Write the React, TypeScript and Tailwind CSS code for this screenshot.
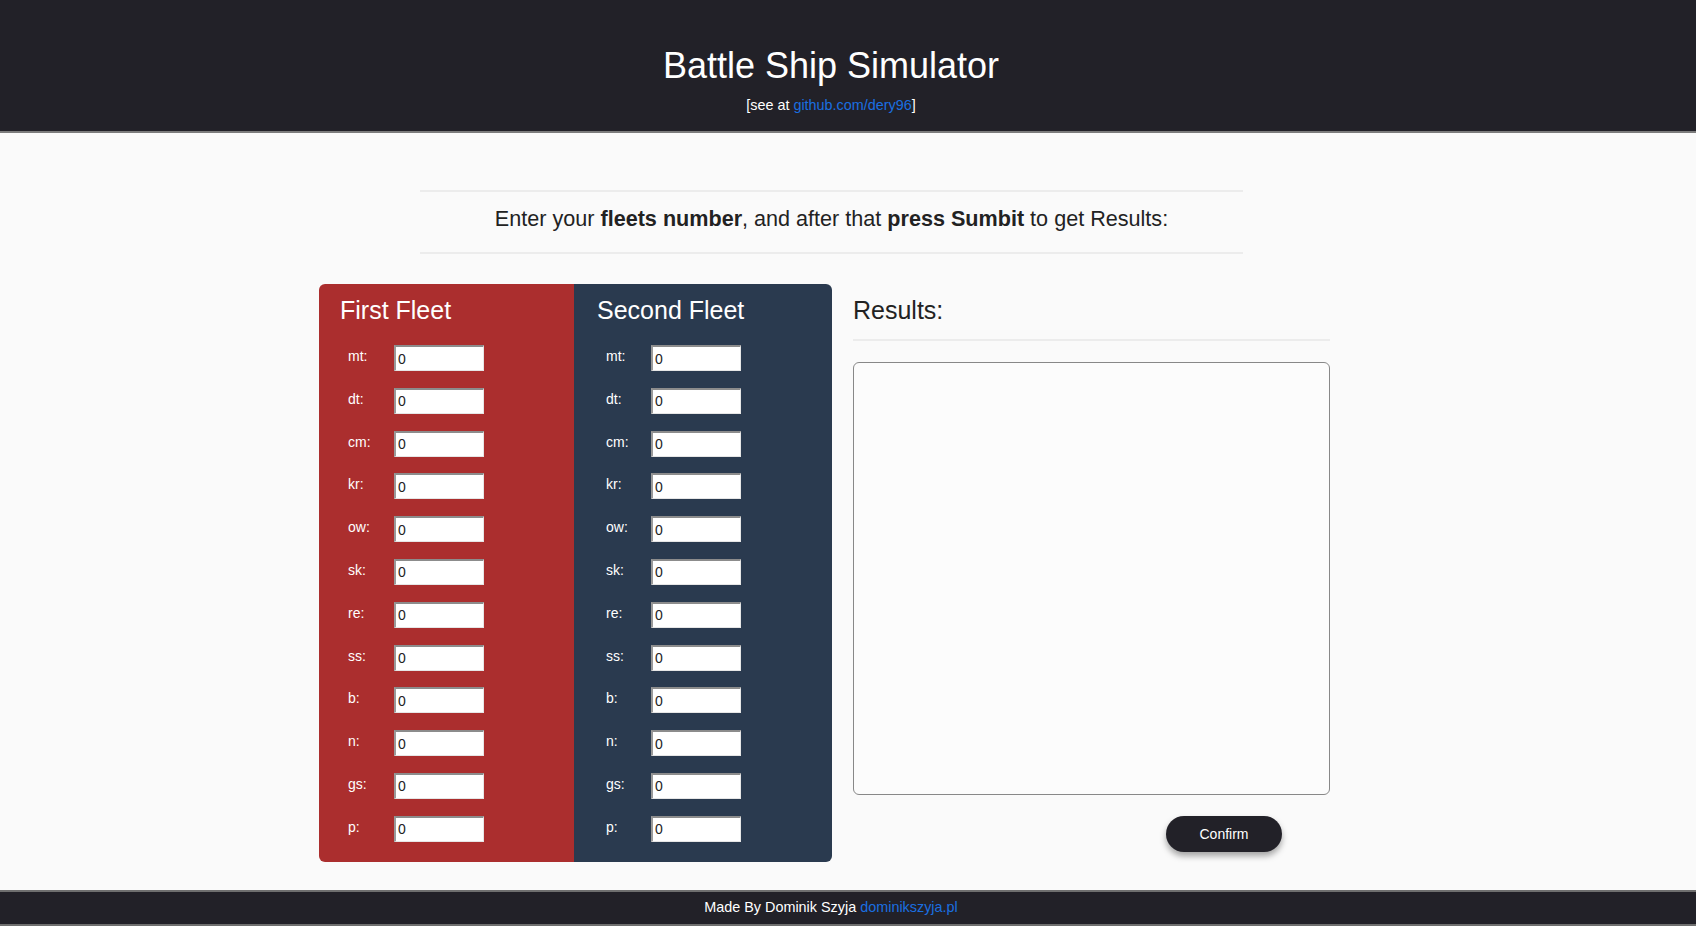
const shipTypes = ["mt", "dt", "cm", "kr", "ow", "sk", "re", "ss", "b", "n", "gs", "p"]

interface FleetProps {
  title: string
  boxClass: string
  titleClass: string
  labelClass: string
}

function Fleet({ title, boxClass, titleClass, labelClass }: FleetProps) {
  return (
    <div className={boxClass}>
      <h3 className={titleClass}>{title}</h3>
      <div className="mt-[20px] flex flex-col gap-[16.8px]">
        {shipTypes.map((s) => (
          <div key={s} className="flex items-start h-[26px]">
            <label className={labelClass}>{s}:</label>
            <input
              type="text"
              defaultValue="0"
              className="w-[90px] h-[26px] bg-white text-[14px] text-[#222] pl-[2px] border-t-2 border-l-2 border-b border-r border-t-[#8c8c8c] border-l-[#9a9a9a] border-b-[#e6e6e6] border-r-[#e6e6e6] outline-none"
            />
          </div>
        ))}
      </div>
    </div>
  )
}

export default function App() {
  return (
    <div className="min-h-[926px] bg-[#fafafa] flex flex-col font-['Liberation_Sans',Arial,sans-serif]">
      <header className="h-[133px] bg-[#222128] border-b-2 border-[#7c7c7c] flex flex-col items-center pt-[46px] pr-[34px]">
        <h1 className="text-[36px] leading-[40px] text-white">Battle Ship Simulator</h1>
        <p className="mt-[9px] text-[14.4px] leading-[20px] text-white">
          [see at <a href="#" className="text-[#1a6fe0]">github.com/dery96</a>]
        </p>
      </header>

      <main className="flex-1 flex flex-col">
        <div className="ml-[420px] w-[823px] mt-[57px]">
          <div className="border-t-2 border-[#ececec]" />
          <p className="pt-[12px] pb-[18px] text-center text-[21.6px] leading-[30px] text-[#222]">
            Enter your <b>fleets number</b>, and after that <b>press Sumbit</b> to get Results:
          </p>
          <div className="border-t-2 border-[#ececec]" />
        </div>

        <div className="ml-[319px] mt-[30px] flex">
          <div className="flex h-[578px] rounded-[6px] overflow-hidden">
            <Fleet
              title="First Fleet"
              boxClass="w-[255px] bg-[#ab2e2e] pt-[11px]"
              titleClass="pl-[21px] text-[25px] leading-[30px] text-white"
              labelClass="w-[75px] pl-[29px] mt-[1px] text-[14px] leading-[20px] text-white"
            />
            <Fleet
              title="Second Fleet"
              boxClass="w-[258px] bg-[#2a3a4f] pt-[11px]"
              titleClass="pl-[23px] text-[25px] leading-[30px] text-white"
              labelClass="w-[77px] pl-[32px] mt-[1px] text-[14px] leading-[20px] text-white"
            />
          </div>

          <div className="ml-[21px] w-[477px] pt-[11px] flex flex-col">
            <h3 className="text-[25px] leading-[30px] text-[#222]">Results:</h3>
            <div className="mt-[14px] border-t-2 border-[#ececec]" />
            <textarea className="mt-[21px] h-[433px] w-full rounded-[6px] border border-[#888] bg-[#fcfcfc] resize-none outline-none" />
            <button className="mt-[21px] ml-[313px] w-[116px] h-[36px] rounded-full bg-[#222128] text-white text-[14px] shadow-[0_4px_6px_rgba(0,0,0,0.35)]">
              Confirm
            </button>
          </div>
        </div>
      </main>

      <footer className="mt-[27px] h-[36px] bg-[#222128] border-t-2 border-b-2 border-[#6f6f6f] flex items-center justify-center pr-[34px] text-[14.4px] text-white">
        Made By Dominik Szyja&nbsp;<a href="#" className="text-[#1a6fe0]">dominikszyja.pl</a>
      </footer>
    </div>
  )
}
